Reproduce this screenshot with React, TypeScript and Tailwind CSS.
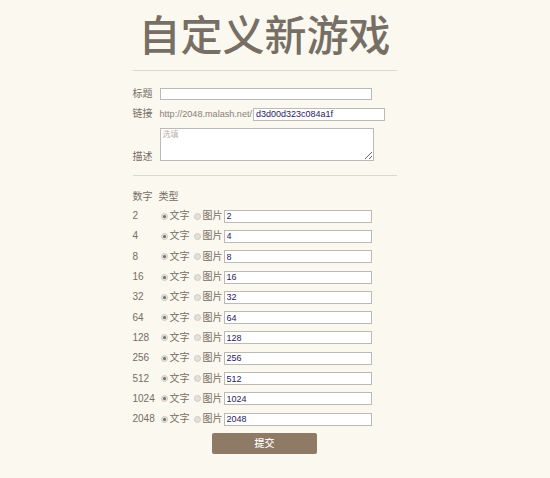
import { useState } from "react";

const NUMBERS = [2, 4, 8, 16, 32, 64, 128, 256, 512, 1024, 2048];

const FONT = "font-['Liberation_Sans','Noto_Sans_CJK_SC',sans-serif]";

function Radio({ checked }: { checked: boolean }) {
    return (
        <span className="flex items-center justify-center w-[7px] h-[7px] rounded-full bg-[#e2e0dc] border border-[#cfcbc4] shrink-0">
            {checked && <span className="w-[3px] h-[3px] rounded-full bg-[#6f6a64]" />}
        </span>
    );
}

function TileRow({ value }: { value: number }) {
    const [kind, setKind] = useState<"text" | "image">("text");
    return (
        <div className="flex items-center h-[20.3px]">
            <span className="w-[27px] shrink-0">{value}</span>
            <label className="flex items-center cursor-pointer ml-[1px]" onClick={() => setKind("text")}>
                <Radio checked={kind === "text"} />
                <span className="ml-[2px]">文字</span>
            </label>
            <label className="flex items-center cursor-pointer ml-[4px]" onClick={() => setKind("image")}>
                <Radio checked={kind === "image"} />
                <span className="ml-[2px]">图片</span>
            </label>
            <input
                defaultValue={String(value)}
                className="ml-[1px] w-[148px] h-[13px] bg-white border border-[#bdbab5] px-[2px] text-[9px] leading-[11px] text-[#2a2060] outline-none"
            />
        </div>
    );
}

export default function App() {
    return (
        <div className={`min-h-[478px] bg-[#faf8ef] text-[#776e65] text-[10px] leading-[12px] ${FONT}`}>
            <div className="flex justify-center pr-[21px]">
                <div className="w-[264px] pt-[12px]">
                    <h1 className="h-[42px] text-center text-[42px] leading-[42px] font-medium text-[#776e65] font-['Noto_Sans_CJK_SC',sans-serif]">
                        自定义新游戏
                    </h1>
                    <div className="mt-[16px] h-px bg-[#dcd8d0]" />

                    {/* title / link / description */}
                    <div className="mt-[17px] flex items-center h-[12px]">
                        <span className="w-[27px] shrink-0">标题</span>
                        <input className="w-[212px] h-[12px] bg-white border border-[#bdbab5] outline-none" />
                    </div>
                    <div className="mt-[8px] flex items-center h-[12px]">
                        <span className="w-[27px] shrink-0">链接</span>
                        <span className="text-[9.1px] text-[#8a817a]">http://2048.malash.net/</span>
                        <input
                            defaultValue="d3d00d323c084a1f"
                            className="ml-[1px] w-[132px] h-[13px] bg-white border border-[#bdbab5] px-[2px] text-[9px] leading-[11px] text-[#2a2060] outline-none"
                        />
                    </div>
                    <div className="mt-[8px] flex items-end h-[33px]">
                        <span className="w-[27px] shrink-0 mb-[-2px]">描述</span>
                        <textarea
                            placeholder="选填"
                            className="w-[214px] h-[33px] bg-white border border-[#bdbab5] px-[2px] py-[1px] text-[8px] leading-[10px] outline-none placeholder:text-[#b8b2ab]"
                        />
                    </div>
                    <div className="mt-[14px] h-px bg-[#dcd8d0]" />

                    {/* tile settings */}
                    <div className="mt-[15px] flex items-center h-[12px]">
                        <span className="w-[26px] shrink-0">数字</span>
                        <span>类型</span>
                    </div>
                    <div className="mt-[3px] flex flex-col">
                        {NUMBERS.map((n) => (
                            <TileRow key={n} value={n} />
                        ))}
                    </div>

                    <button
                        type="button"
                        className="mt-[4px] mx-auto flex items-center justify-center w-[105px] h-[21px] rounded-[2px] bg-[#8f7a66] text-white text-[10px] font-medium"
                    >
                        提交
                    </button>
                </div>
            </div>
        </div>
    );
}
